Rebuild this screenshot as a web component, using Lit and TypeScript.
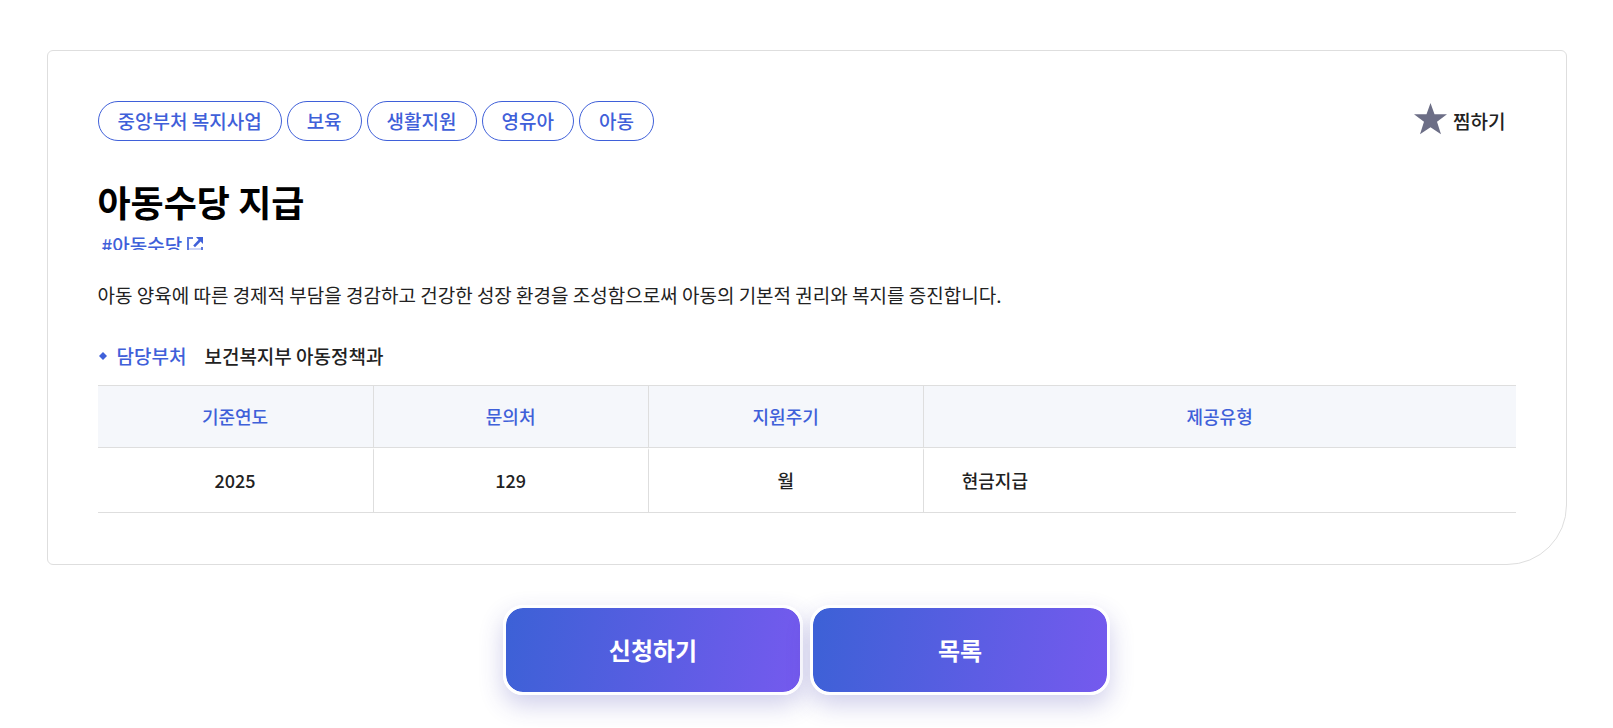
import { LitElement, html, css } from "lit";
import { customElement, state } from "lit/decorators.js";

@customElement("app-root")
export class AppRoot extends LitElement {
  static styles = css`
    :host {
      display: block;
      padding: 50px 24px 32px;
      background: #fff;
      color: #222;
      font-family: "Noto Sans CJK KR", "Noto Sans", sans-serif;
      font-size: 19px;
      line-height: 28px;
    }
    .card {
      box-sizing: border-box;
      max-width: 1520px;
      margin: 0 auto;
      padding: 50px 50px 51px;
      border: 1px solid #dedede;
      border-radius: 6px 6px 60px 6px;
    }
    .top {
      display: flex;
      justify-content: space-between;
      align-items: flex-start;
    }
    .tags {
      display: flex;
      flex-wrap: wrap;
      gap: 5px;
      margin: 0;
      padding: 0;
      list-style: none;
    }
    .tag {
      padding: 5px 19px;
      border: 1px solid #3f60d9;
      border-radius: 20px;
      color: #3f60d9;
      font-weight: 500;
    }
    .pick {
      display: flex;
      align-items: center;
      gap: 6px;
      padding: 0 10px;
      height: 40px;
      border: 0;
      background: none;
      color: #222;
      font: inherit;
      font-weight: 500;
      white-space: nowrap;
      cursor: pointer;
    }
    .star {
      width: 34px;
      height: 34px;
      margin-bottom: 4px;
      fill: #6c6e86;
    }
    .star.on {
      fill: #f5b400;
    }
    .title {
      margin: 38px 0 0;
      color: #000;
      font-size: 36px;
      line-height: 44px;
      font-weight: 700;
    }
    .hashes {
      height: 19px;
      margin-top: 8px;
      padding-left: 4px;
      overflow: hidden;
    }
    .hash {
      display: flex;
      align-items: center;
      gap: 4px;
      width: max-content;
      color: #3f60d9;
      font-weight: 500;
      text-decoration: none;
    }
    .open {
      width: 18px;
      height: 18px;
    }
    .summary {
      margin: 31px 0 0;
    }
    .dept {
      display: flex;
      align-items: center;
      margin: 33px 0 15px;
      font-weight: 500;
    }
    .dot {
      width: 8px;
      height: 8px;
      margin: 0 10px 0 1px;
      fill: #3f60d9;
    }
    .dept-name {
      color: #3f60d9;
    }
    .dept-value {
      margin: 0 0 0 18px;
    }
    .facts {
      width: 100%;
      table-layout: fixed;
      border-collapse: separate;
      border-spacing: 0;
      font-size: 18px;
    }
    .narrow {
      width: 19.4%;
    }
    .head,
    .cell {
      border-bottom: 1px solid #dedede;
      font-weight: 500;
      text-align: center;
    }
    .head {
      padding: 16px 10px 17px;
      border-top: 1px solid #dedede;
      background: #f5f7fb;
      color: #3f60d9;
    }
    .cell {
      padding: 16px 10px 18px;
      border-top: 2px solid #fff;
    }
    .head + .head,
    .cell + .cell {
      border-left: 1px solid #dedede;
    }
    .cell.wide {
      padding-left: 38px;
      text-align: left;
    }
    .actions {
      display: flex;
      justify-content: center;
      gap: 7px;
      margin-top: 40px;
    }
    .action {
      box-sizing: border-box;
      width: 300px;
      height: 90px;
      padding: 0;
      border: 3px solid #fff;
      border-radius: 20px;
      background: linear-gradient(100deg, #3c61d6, #755aee) padding-box;
      box-shadow: 0 10px 24px rgba(60, 55, 170, 0.24);
      color: #fff;
      font: inherit;
      font-size: 24px;
      font-weight: 700;
      cursor: pointer;
    }
  `;

  @state() private picked = false;

  private tags = ["중앙부처 복지사업", "보육", "생활지원", "영유아", "아동"];

  render() {
    return html`
      <main>
        <section class="card">
          <div class="top">
            <ul class="tags">
              ${this.tags.map((t) => html`<li class="tag">${t}</li>`)}
            </ul>
            <button
              class="pick"
              type="button"
              aria-pressed=${this.picked ? "true" : "false"}
              @click=${() => (this.picked = !this.picked)}
            >
              <svg class="star ${this.picked ? "on" : ""}" viewBox="0 0 34 34" aria-hidden="true">
                <path d="M17.500 1 21.500 12.300H34L24 19.800 28 32.300 17.500 25.300 7 32.300 11 19.800 1 12.300H13.500z" />
              </svg>
              찜하기
            </button>
          </div>
          <h1 class="title">아동수당 지급</h1>
          <div class="hashes">
            <a class="hash" href="#tag">
              #아동수당
              <svg class="open" viewBox="0 0 18 18" aria-hidden="true">
                <path d="M2 12h14v4H2z" fill="#cdd5f5" />
                <path d="M7 2H2v14h14v-5" fill="none" stroke="#5b77de" stroke-width="2" />
                <path d="M10 1h7v7l-2.400-2.400-5.600 5.600-1.800-1.800 5.400-5.600z" fill="#3f60d9" />
              </svg>
            </a>
          </div>
          <p class="summary">
            아동 양육에 따른 경제적 부담을 경감하고 건강한 성장 환경을 조성함으로써 아동의 기본적 권리와 복지를 증진합니다.
          </p>
          <dl class="dept">
            <svg class="dot" viewBox="0 0 8 8" aria-hidden="true"><path d="M4 0 8 4 4 8 0 4z" /></svg>
            <dt class="dept-name">담당부처</dt>
            <dd class="dept-value">보건복지부 아동정책과</dd>
          </dl>
          <table class="facts">
            <colgroup>
              <col class="narrow" />
              <col class="narrow" />
              <col class="narrow" />
              <col />
            </colgroup>
            <thead>
              <tr>
                <th class="head" scope="col">기준연도</th>
                <th class="head" scope="col">문의처</th>
                <th class="head" scope="col">지원주기</th>
                <th class="head" scope="col">제공유형</th>
              </tr>
            </thead>
            <tbody>
              <tr>
                <td class="cell">2025</td>
                <td class="cell">129</td>
                <td class="cell">월</td>
                <td class="cell wide">현금지급</td>
              </tr>
            </tbody>
          </table>
        </section>
        <div class="actions">
          <button class="action" type="button">신청하기</button>
          <button class="action" type="button">목록</button>
        </div>
      </main>
    `;
  }
}
